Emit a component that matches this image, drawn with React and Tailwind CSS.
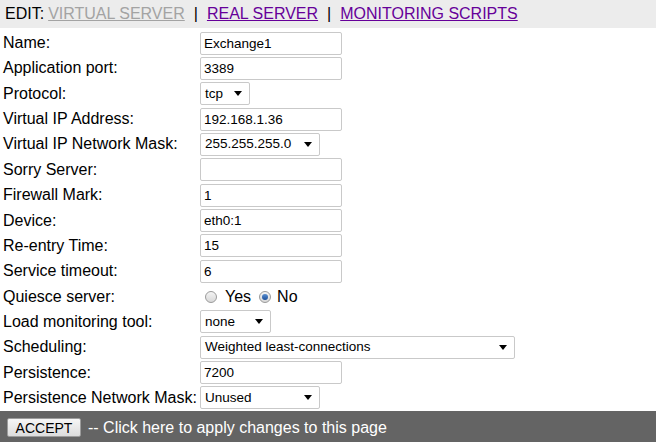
import React from "react";

const font = { fontFamily: '"Liberation Sans", Arial, sans-serif' };

function TextBox({ value, w = "w-[142px]" }) {
  return (
    <input
      readOnly
      value={value}
      className={`${w} h-[23px] border border-[#c9c9c9] rounded-[2px] bg-white px-[3px] text-[13.5px] text-black outline-none`}
      style={font}
    />
  );
}

function Dropdown({ value, w }) {
  return (
    <div className={`${w} h-[23px] border border-[#c9c9c9] rounded-[2px] bg-white flex items-center justify-between pl-[4px] pr-[7px] text-[13.5px] text-black`}>
      <span>{value}</span>
      <span className="w-0 h-0 border-l-[4px] border-r-[4px] border-t-[5px] border-l-transparent border-r-transparent border-t-black"></span>
    </div>
  );
}

function Radio({ checked }) {
  return (
    <span className="inline-flex w-[12px] h-[12px] rounded-full border border-[#9a9a9a] bg-gradient-to-b from-[#f4f4f4] to-[#d8d8d8] items-center justify-center">
      {checked && <span className="w-[6px] h-[6px] rounded-full bg-gradient-to-b from-[#5a8fd0] to-[#1a4f9a]"></span>}
    </span>
  );
}

const rows = [
  ["Name:", <TextBox value="Exchange1" />],
  ["Application port:", <TextBox value="3389" />],
  ["Protocol:", <Dropdown value="tcp" w="w-[50px]" />],
  ["Virtual IP Address:", <TextBox value="192.168.1.36" />],
  ["Virtual IP Network Mask:", <Dropdown value="255.255.255.0" w="w-[120px]" />],
  ["Sorry Server:", <TextBox value="" />],
  ["Firewall Mark:", <TextBox value="1" />],
  ["Device:", <TextBox value="eth0:1" />],
  ["Re-entry Time:", <TextBox value="15" />],
  ["Service timeout:", <TextBox value="6" />],
  [
    "Quiesce server:",
    <div className="flex items-center text-[16px] text-black pl-[5px]">
      <Radio />
      <span className="ml-[8px] mr-[8px]">Yes</span>
      <Radio checked />
      <span className="ml-[6px]">No</span>
    </div>,
  ],
  ["Load monitoring tool:", <Dropdown value="none" w="w-[71px]" />],
  ["Scheduling:", <Dropdown value="Weighted least-connections" w="w-[315px]" />],
  ["Persistence:", <TextBox value="7200" />],
  ["Persistence Network Mask:", <Dropdown value="Unused" w="w-[120px]" />],
];

export default function App() {
  return (
    <div className="w-[656px] h-[442px] bg-white flex flex-col overflow-hidden" style={font}>
      <div className="h-[29px] bg-[#ececec] flex items-center px-[5px] text-[16px] text-black">
        <span>EDIT:</span>
        <span className="ml-[4px] text-[#a3a3a3] underline">VIRTUAL SERVER</span>
        <span className="mx-[9px]">|</span>
        <span className="text-[#660099] underline">REAL SERVER</span>
        <span className="mx-[9px]">|</span>
        <span className="text-[#660099] underline">MONITORING SCRIPTS</span>
      </div>
      <div className="flex flex-col pt-[2px] flex-1">
        {rows.map(([label, ctrl], i) => (
          <div key={i} className="h-[25.35px] flex items-center">
            <div className="w-[200px] pl-[3px] text-[16px] text-black whitespace-nowrap">{label}</div>
            <div className="flex items-center">{ctrl}</div>
          </div>
        ))}
      </div>
      <div className="h-[32px] bg-[#646464] flex items-center px-[7px] pt-[3px]">
        <button className="w-[74px] h-[19px] border border-[#9c9c9c] rounded-[2px] bg-gradient-to-b from-[#f6f6f6] to-[#dcdcdc] text-[14px] text-black leading-none" style={font}>
          ACCEPT
        </button>
        <span className="ml-[7px] text-[16px] text-white">-- Click here to apply changes to this page</span>
      </div>
    </div>
  );
}
